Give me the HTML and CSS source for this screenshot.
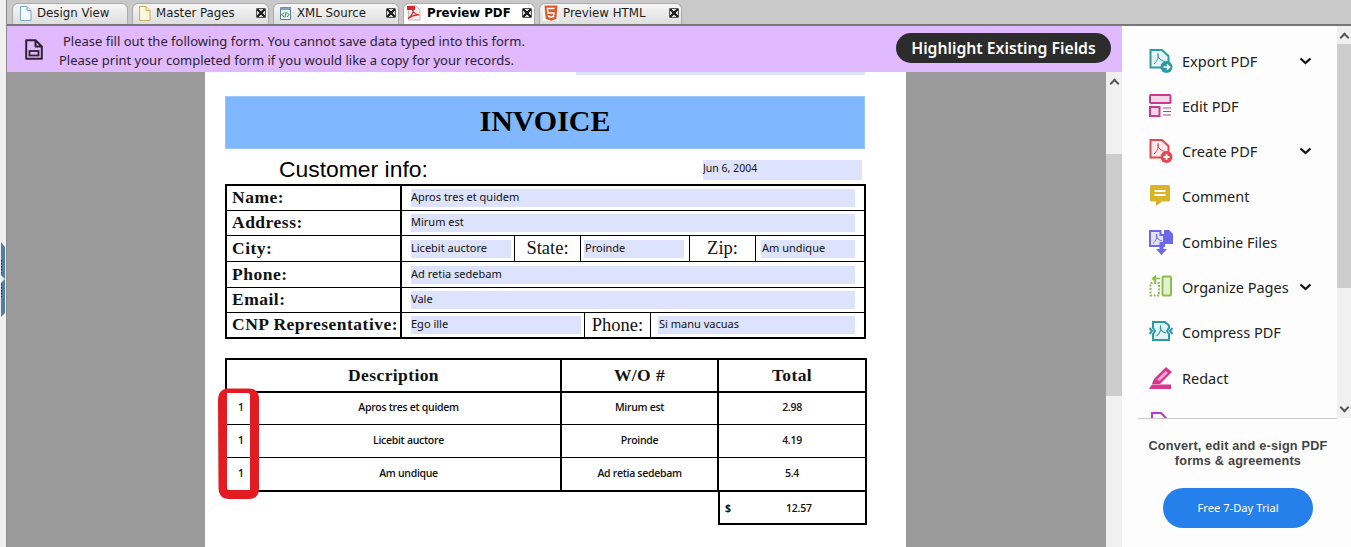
FILE: index.html
```html
<!DOCTYPE html>
<html lang="en">
<head>
<meta charset="utf-8">
<title>Preview PDF</title>
<link rel="stylesheet" href="styles.css">
</head>
<body>
<div class="gutter">
  <svg class="notch" width="6" height="76" viewBox="0 0 6 76"><path d="M1 0 L5 5 V71 L1 75 Z" fill="#4f7ea8"/><path d="M1.500 18 V55" stroke="#1d3a55" stroke-width="1" stroke-dasharray="1.500 1.500"/><path d="M1 33 L5 37 L1 41 Z" fill="#dfe8f0"/></svg>
</div>
<div class="app">
  <nav class="tabs">
    <div class="tab tab-design">
      <svg class="tab-icon" width="13" height="15" viewBox="0 0 13 15"><path d="M1.500 .5 H8 L12 4.500 V14.500 H1.500 Z" fill="#f4f9fe" stroke="#7fa6cf"/><path d="M8 .5 V4.500 H12" fill="#d5e5f5" stroke="#7fa6cf"/></svg>
      <span>Design View</span>
    </div>
    <div class="tab tab-master">
      <svg class="tab-icon" width="13" height="15" viewBox="0 0 13 15"><path d="M1.500 .5 H8 L12 4.500 V14.500 H1.500 Z" fill="#fdf8dc" stroke="#c9ad5e"/><path d="M8 .5 V4.500 H12" fill="#f5e6a8" stroke="#c9ad5e"/></svg>
      <span>Master Pages</span>
      <i class="close"></i>
    </div>
    <div class="tab tab-xml">
      <svg class="tab-icon" width="13" height="15" viewBox="0 0 13 15"><path d="M1.500 1.500 H11.500 V13.500 H1.500 Z" fill="#eef3f8" stroke="#5c7f9f"/><path d="M1.500 1.500 H11.500 V4 H1.500 Z" fill="#7ea0c0"/><path d="M5 6.500 L3 8.700 L5 11 M8 6.500 L10 8.700 L8 11 M7.200 6 L5.800 11.500" fill="none" stroke="#2c8a2c"/></svg>
      <span>XML Source</span>
      <i class="close"></i>
    </div>
    <div class="tab tab-pdf active">
      <svg class="tab-icon" width="14" height="16" viewBox="0 0 14 16"><path d="M1.500 1 H9 L13 5 V15 H1.500 Z" fill="#fbeeee" stroke="#bdbdbd"/><path d="M0 1 H8 V5 H0 Z" fill="#d92b2b"/><path d="M1 13.500 C5 11 7 6 6 4 C5 5 6 9 12.500 10 C9 9.500 5 10.500 1 13.500 Z" fill="none" stroke="#d92b2b" stroke-width="1.200"/></svg>
      <span>Preview PDF</span>
      <i class="close"></i>
    </div>
    <div class="tab tab-html">
      <svg class="tab-icon" width="16" height="16" viewBox="0 0 16 16"><rect width="16" height="16" fill="#f7f7f7"/><path d="M1.500 0.500 H14.500 L13.300 14 L8 15.700 L2.700 14 Z" fill="#e4572b"/><path d="M11.500 3.500 H4.500 L4.900 8 H10.800 L10.500 11.500 L8 12.300 L5.600 11.500 L5.500 10" fill="none" stroke="#fff" stroke-width="1.500"/></svg>
      <span>Preview HTML</span>
      <i class="close"></i>
    </div>
  </nav>
  <div class="main">
    <section class="viewer">
      <header class="bar">
        <svg class="bar-icon" width="18" height="21" viewBox="0 0 18 21"><path d="M1.200 1.200 H10.500 L16.800 7.500 V19.800 H1.200 Z M10.500 1.200 V7.500 H16.800" fill="none" stroke="#2e2333" stroke-width="2" stroke-linejoin="round"/><rect x="4.500" y="12" width="9" height="4.500" fill="none" stroke="#2e2333" stroke-width="1.800"/></svg>
        <div class="bar-text">
          <p class="bar-line-first">Please fill out the following form. You cannot save data typed into this form.</p>
          <p>Please print your completed form if you would like a copy for your records.</p>
        </div>
        <button class="highlight">Highlight Existing Fields</button>
      </header>
      <div class="view">
        <div class="canvas">
          <article class="page">
            <div class="top-field"></div>
            <h1 class="banner">INVOICE</h1>
            <div class="info">
              <h2 class="info-title">Customer info:</h2>
              <div class="field date">Jun 6, 2004</div>
            </div>
            <div class="customer">
              <div class="row r1"><div class="label">Name:</div><div class="value"><div class="field">Apros tres et quidem</div></div></div>
              <div class="row r2"><div class="label">Address:</div><div class="value"><div class="field">Mirum est</div></div></div>
              <div class="row r3"><div class="label">City:</div>
                <div class="seg seg-city"><div class="field">Licebit auctore</div></div>
                <div class="seg seg-label">State:</div>
                <div class="seg seg-state"><div class="field">Proinde</div></div>
                <div class="seg seg-label">Zip:</div>
                <div class="seg seg-zip"><div class="field">Am undique</div></div>
              </div>
              <div class="row r4"><div class="label">Phone:</div><div class="value"><div class="field">Ad retia sedebam</div></div></div>
              <div class="row r5"><div class="label">Email:</div><div class="value"><div class="field">Vale</div></div></div>
              <div class="row r6"><div class="label">CNP Representative:</div>
                <div class="seg seg-rep"><div class="field">Ego ille</div></div>
                <div class="seg seg-label">Phone:</div>
                <div class="seg seg-phone"><div class="field">Si manu vacuas</div></div>
              </div>
            </div>
            <div class="items">
              <table class="items-table">
                <colgroup><col class="c-qty"><col class="c-desc"><col class="c-wo"><col class="c-total"></colgroup>
                <thead><tr><th colspan="2">Description</th><th>W/O #</th><th>Total</th></tr></thead>
                <tbody>
                  <tr><td class="qty">1</td><td class="desc">Apros tres et quidem</td><td>Mirum est</td><td>2.98</td></tr>
                  <tr><td class="qty">1</td><td class="desc">Licebit auctore</td><td>Proinde</td><td>4.19</td></tr>
                  <tr class="last"><td class="qty">1</td><td class="desc">Am undique</td><td>Ad retia sedebam</td><td>5.4</td></tr>
                </tbody>
              </table>
              <div class="sum"><span class="sum-cur">$</span><span class="sum-val">12.57</span></div>
              <svg class="mark" width="41" height="111" viewBox="0 0 41 111"><path fill-rule="evenodd" fill="#e31c23" d="M10 0.500 H31 Q41 0.500 41 11 V100 Q41 111 31 111 H11 Q1 111 0.500 100 L0 13 Q0 1 10 0.500 Z M9 5 V100 Q9 102 11 102 H32 V7 Q32 5 30 5 Z"/></svg>
            </div>
          </article>
        </div>
        <div class="vscroll vscroll-view">
          <span class="arrow up"></span>
          <span class="thumb"></span>
        </div>
      </div>
    </section>
    <aside class="panel">
      <div class="tools-wrap">
        <ul class="tools">
          <li class="tool">
            <svg class="tool-icon" width="24" height="24" viewBox="0 0 24 24"><path d="M1.500 1 H13 L19.500 7 V18.500 H1.500 Z" fill="#e4f3f4" stroke="#2d9aa5" stroke-width="2"/><path d="M5 15 C8.500 12 10 7 9 4.500 C8 7 10 11 16 12.500" fill="none" stroke="#2d9aa5"/><circle cx="17.500" cy="18" r="6" fill="#2d9aa5"/><path d="M14.500 18 H20 M18 15.500 L20.500 18 L18 20.500" fill="none" stroke="#fff" stroke-width="1.700"/></svg>
            <span>Export PDF</span>
            <svg class="chev" width="13" height="8" viewBox="0 0 13 8"><path d="M1.500 1.500 L6.500 6 L11.500 1.500" fill="none" stroke="#111" stroke-width="2.200"/></svg>
          </li>
          <li class="tool">
            <svg class="tool-icon" width="24" height="24" viewBox="0 0 24 24"><rect x="1" y="1" width="20.500" height="8" rx="1" fill="#f7d5e9" stroke="#c8398f" stroke-width="2"/><rect x="1" y="13" width="9.500" height="9" fill="#f7d5e9" stroke="#c8398f" stroke-width="2"/><path d="M14 14 H22 M14 17.500 H22 M14 21 H22" stroke="#c8398f" stroke-width="1"/></svg>
            <span>Edit PDF</span>
          </li>
          <li class="tool">
            <svg class="tool-icon" width="24" height="24" viewBox="0 0 24 24"><path d="M1.500 1 H13 L19.500 7 V18.500 H1.500 Z" fill="#fbe9ea" stroke="#e34850" stroke-width="2"/><path d="M5 15 C8.500 12 10 7 9 4.500 C8 7 10 11 16 12.500" fill="none" stroke="#e34850"/><circle cx="17.500" cy="18" r="6" fill="#e34850"/><path d="M14.500 18 H20.500 M17.500 15 V21" stroke="#fff" stroke-width="1.800"/></svg>
            <span>Create PDF</span>
            <svg class="chev" width="13" height="8" viewBox="0 0 13 8"><path d="M1.500 1.500 L6.500 6 L11.500 1.500" fill="none" stroke="#111" stroke-width="2.200"/></svg>
          </li>
          <li class="tool">
            <svg class="tool-icon" width="24" height="24" viewBox="0 0 24 24"><path d="M2.500 1 H19.500 Q21 1 21 2.500 V16 Q21 17.500 19.500 17.500 H13 L7 22 V17.500 H2.500 Q1 17.500 1 16 V2.500 Q1 1 2.500 1 Z" fill="#d7b527"/><path d="M5.500 7 H16.500 M5.500 11 H16.500" stroke="#fff" stroke-width="1.800"/></svg>
            <span>Comment</span>
          </li>
          <li class="tool">
            <svg class="tool-icon" width="24" height="26" viewBox="0 0 24 26"><path d="M1 2 H11.500 V6 H15 V17 H1 Z" fill="#e3e2fb" stroke="#6d68e8" stroke-width="2"/><path d="M15 1 H20 L24 5 V15 H15 Z" fill="#6d68e8"/><path d="M4 14.500 C7 12 8.500 8 7.500 5 C7 8 9 11 13 12" fill="none" stroke="#6d68e8"/><path d="M10.500 13 V20 H7 L12.500 26 L18 20 H14.500 V13 Z" fill="#6d68e8"/></svg>
            <span>Combine Files</span>
          </li>
          <li class="tool">
            <svg class="tool-icon" width="24" height="24" viewBox="0 0 24 24"><rect x="13.500" y="1.500" width="8.500" height="19" rx="1" fill="#e3f1d3" stroke="#8cc04b" stroke-width="2"/><path d="M1.500 8 H10 V20.500 H1.500 Z" fill="none" stroke="#8cc04b" stroke-width="2" stroke-dasharray="2 1.500"/><path d="M11 3.500 H6.500 M6.500 1 L3.500 3.500 L6.500 6.500 Z" fill="#8cc04b" stroke="#8cc04b" stroke-width="1.500"/></svg>
            <span>Organize Pages</span>
            <svg class="chev" width="13" height="8" viewBox="0 0 13 8"><path d="M1.500 1.500 L6.500 6 L11.500 1.500" fill="none" stroke="#111" stroke-width="2.200"/></svg>
          </li>
          <li class="tool">
            <svg class="tool-icon" width="24" height="24" viewBox="0 0 24 24"><path d="M4 2 H16 L20 5.500 V8 L18 11 L20 14 V20 H4 V14 L6 11 L4 8 Z" fill="#e4f3f4" stroke="#2d9aa5" stroke-width="2"/><path d="M7.500 16 C10.500 14 12.500 9.500 11.500 6.500 C11 9 12.500 12 17 13" fill="none" stroke="#2d9aa5" stroke-width="1.200"/><path d="M0.500 8 L3 11 L0.500 14 M23.500 8 L21 11 L23.500 14" fill="none" stroke="#2d9aa5" stroke-width="2"/></svg>
            <span>Compress PDF</span>
          </li>
          <li class="tool tool-redact">
            <svg class="tool-icon" width="24" height="24" viewBox="0 0 24 24"><path d="M17 1 L23 6 L11 18 H3 L5 13 Z" fill="#d83790"/><path d="M16.500 5 L19 7 L10.500 15 L8 13.500 Z" fill="#f0a8d0"/><path d="M0 23 L3 18.500 H22 V23 Z" fill="#d83790"/></svg>
            <span>Redact</span>
          </li>
          <li class="tool">
            <svg class="tool-icon" width="24" height="24" viewBox="0 0 24 24"><path d="M3 20 V2 H12 L18 8" fill="none" stroke="#b53bd0" stroke-width="2"/></svg>
            <span>&nbsp;</span>
          </li>
        </ul>
        <div class="vscroll vscroll-panel">
          <span class="arrow up"></span>
          <span class="thumb"></span>
          <span class="arrow down"></span>
        </div>
      </div>
      <div class="promo">
        <p class="promo-text">Convert, edit and e-sign PDF<br>forms &amp; agreements</p>
        <button class="trial">Free 7-Day Trial</button>
      </div>
    </aside>
  </div>
</div>
</body>
</html>
```

FILE: styles.css
```css
* { box-sizing: border-box; }
html, body { margin: 0; padding: 0; }
body {
  width: 1351px;
  height: 547px;
  overflow: hidden;
  display: flex;
  background: #f0f0f0;
  font-family: "Noto Sans", sans-serif;
  color: #111;
}
p, h1, h2, ul { margin: 0; padding: 0; }

.gutter { width: 6px; flex: none; padding-top: 242px; }
.notch { display: block; }
.app { flex: 1; min-width: 0; display: flex; flex-direction: column; border-left: 1px solid #8a8a8a; }

/* tabs */
.tabs {
  height: 26px;
  flex: none;
  display: flex;
  gap: 4px;
  padding: 3px 0 0 5px;
  background: #c9c9c9;
  border-bottom: 2px solid;
  border-bottom-color: #777;
  font: 11.800px "DejaVu Sans", sans-serif;
  color: #1c1c1c;
}
.tab {
  height: 21px;
  display: flex;
  align-items: center;
  padding: 0 0 2px 5px;
  border: 1px solid #ababab;
  border-bottom: 0;
  border-radius: 6px 6px 0 0;
  background: linear-gradient(#f6f6f6, #dedede);
}
.tab span { white-space: nowrap; }
.tab-icon { flex: none; margin-right: 5px; }
.tab-design { width: 116px; padding-left: 6px; }
.tab-master { width: 137px; }
.tab-xml { width: 126px; }
.tab-pdf { width: 132px; padding-left: 3px; }
.tab-pdf .tab-icon { margin-right: 6px; }
.tab-html { width: 143px; padding-left: 3px; }
.tab-html .tab-icon { margin-right: 4px; }
.tab.active { background: #fff; font-weight: 700; color: #000; }
.close {
  width: 10px;
  height: 10px;
  margin-left: auto;
  margin-right: 2px;
  flex: none;
  border: 1px solid #555;
  border-radius: 1px;
  background: linear-gradient(45deg, transparent 42%, #222 42%, #222 58%, transparent 58%),
              linear-gradient(-45deg, transparent 42%, #222 42%, #222 58%, transparent 58%),
              #d8d8d8;
}

/* layout */
.main { flex: 1; min-height: 0; display: flex; }
.viewer { width: 1115px; flex: none; display: flex; flex-direction: column; }

/* purple bar */
.bar {
  height: 46px;
  flex: none;
  display: flex;
  align-items: center;
  background: #e1b9fe;
  padding: 0 11px 0 18px;
  position: relative;
  z-index: 1;
}
.bar-icon { flex: none; margin: 0 16px 0 0; }
.bar-text { font-size: 13px; line-height: 19px; color: #2a2233; padding-top: 3px; }
.bar-line-first { margin-left: 4px; }
.highlight {
  margin-left: auto;
  width: 215px;
  height: 30px;
  margin-top: -2px;
  border: 0;
  border-radius: 15px;
  background: #2c2c2c;
  color: #fff;
  font: 600 15.750px "Noto Sans", sans-serif;
  padding: 0;
}

/* document canvas */
.view { flex: 1; min-height: 0; display: flex; }
.canvas { width: 1099px; flex: none; background: #9b9b9b; padding-left: 198px; overflow: hidden; }
.page { width: 701px; height: 100%; background: #fff; padding-left: 20px; }
.top-field { width: 289px; height: 3px; margin-left: 351px; background: #dde3fd; }
.banner {
  width: 640px;
  height: 53px;
  margin-top: 21px;
  background: #80b8ff;
  border: 1px solid #9cc6f5;
  font: 700 30px/47px "Liberation Serif", serif;
  text-align: center;
  color: #000;
}
.info { width: 641px; height: 20px; margin-top: 11px; display: flex; align-items: center; }
.info-title { padding: 0 0 2px 54px; font: 400 22.900px/18px "Liberation Sans", sans-serif; color: #000; white-space: nowrap; }
.field {
  flex: 1;
  height: 18px;
  min-width: 0;
  background: #dde3fd;
  font: 400 11px/16px "Noto Sans", sans-serif;
  color: #111;
  white-space: nowrap;
  overflow: hidden;
}
.date { flex: none; width: 159px; height: 20px; margin-left: auto; margin-right: 4px; line-height: 17px; font-size: 10.500px; }

/* customer table */
.customer { width: 641px; height: 155px; margin-top: 4px; border: 2px solid #000; display: flex; flex-direction: column; }
.row { display: flex; border-bottom: 1px solid #000; }
.r1, .r2, .r5 { height: 25px; }
.r3, .r4 { height: 26px; }
.r6 { height: 24px; border-bottom: 0; }
.label {
  width: 175px;
  flex: none;
  padding-left: 5px;
  border-right: 2px solid #000;
  font: 700 17.500px/23px "Liberation Serif", serif;
  letter-spacing: .5px;
  color: #111;
  white-space: nowrap;
}
.r1 .label { line-height: 22px; }
.r3 .label, .r4 .label { line-height: 25px; }
.value { flex: 1; display: flex; align-items: center; padding: 0 9px; }
.seg { display: flex; align-items: center; flex: none; border-right: 1px solid #000; }
.seg-label { width: 66px; justify-content: center; font: 400 18.500px "Liberation Serif", serif; color: #111; }
.seg-city { width: 113px; padding: 0 3px 0 9px; }
.seg-state { width: 109px; padding: 0 5px 0 3px; }
.seg-zip { flex: 1; padding: 0 9px 0 5px; border-right: 0; }
.seg-rep { width: 183px; padding: 0 3px 0 9px; }
.seg-phone { flex: 1; padding: 0 9px 0 7px; border-right: 0; }
.seg-state .field, .seg-zip .field, .seg-phone .field { padding-left: 1px; }

/* items table */
.items { position: relative; margin-top: 19px; width: 642px; }
.items-table {
  width: 642px;
  table-layout: fixed;
  border-collapse: separate;
  border-spacing: 0;
  border: 2px solid #000;
  border-bottom: 0;
}
.c-qty { width: 30px; }
.c-desc { width: 305px; }
.c-wo { width: 157px; }
.items-table th {
  height: 33px;
  padding: 0;
  border-bottom: 2px solid #000;
  border-right: 2px solid #000;
  font: 700 17.500px "Liberation Serif", serif;
  letter-spacing: .4px;
  color: #111;
}
.items-table td {
  height: 33px;
  padding: 0 0 2px;
  border-bottom: 1px solid #000;
  border-right: 2px solid #000;
  text-align: center;
  font: 600 10.500px "Open Sans", sans-serif;
  letter-spacing: -.3px;
  color: #111;
}
.items-table tbody tr:first-child td { height: 32px; padding-bottom: 3px; }
.items-table th:last-child, .items-table td:last-child { border-right: 0; }
.items-table td.qty { border-right: 0; text-align: left; padding-left: 11px; }
.items-table .last td { height: 34px; border-bottom-width: 2px; }
.sum {
  width: 149px;
  height: 33px;
  margin-left: 493px;
  display: flex;
  align-items: center;
  padding-left: 5px;
  border: 2px solid #000;
  border-top: 0;
  font: 600 10.500px "Open Sans", sans-serif;
  color: #111;
}
.sum-cur { font-weight: 700; }
.sum-val { margin-left: 55px; letter-spacing: -.2px; }
.mark { position: absolute; left: -7px; top: 30px; }

/* scrollbars */
.vscroll { display: flex; flex-direction: column; align-items: stretch; flex: none; background: #f0f0f0; position: relative; }
.vscroll-view { width: 16px; padding-top: 82px; }
.vscroll-view .thumb { height: 242px; }
.vscroll-panel { width: 14px; padding-top: 18px; }
.vscroll-panel .thumb { height: 244px; }
.thumb { display: block; background: #cdcdcd; }
.arrow { position: absolute; left: 50%; width: 7px; height: 7px; margin-left: -3.500px; border-left: 2px solid #555; border-top: 2px solid #555; transform: rotate(45deg); }
.arrow.up { top: 8px; }
.arrow.down { bottom: 7px; transform: rotate(225deg); }

/* right panel */
.panel { flex: 1; min-width: 0; display: flex; flex-direction: column; background: #fdfdfd; }
.tools-wrap { height: 392px; flex: none; display: flex; }
.tools { width: 215px; flex: none; list-style: none; padding-top: 11.900px; overflow: hidden; }
.tool {
  height: 45.280px;
  display: flex;
  align-items: center;
  padding: 0 25px 0 27px;
  font-size: 14.500px;
  color: #222;
  white-space: nowrap;
}
.tool-redact { padding-top: 1px; }
.tool-icon { flex: none; margin-right: 9px; }
.chev { margin-left: auto; flex: none; }
.promo { flex: 1; display: flex; flex-direction: column; align-items: center; position: relative; padding-top: 21px; }
.promo::before { content: ""; position: absolute; top: 0; left: 16px; width: 199px; height: 1px; background: #c8c8c8; }
.promo-text { font: 700 12.700px/15px "Liberation Sans", sans-serif; letter-spacing: .2px; text-align: center; color: #444; margin-left: 3px; white-space: nowrap; }
.trial {
  width: 150px;
  height: 40px;
  margin: 19px 0 0 3px;
  padding: 0 0 2px;
  border: 0;
  border-radius: 20px;
  background: #2680eb;
  color: #fff;
  font: 400 11.200px "Noto Sans", sans-serif;
}
```
